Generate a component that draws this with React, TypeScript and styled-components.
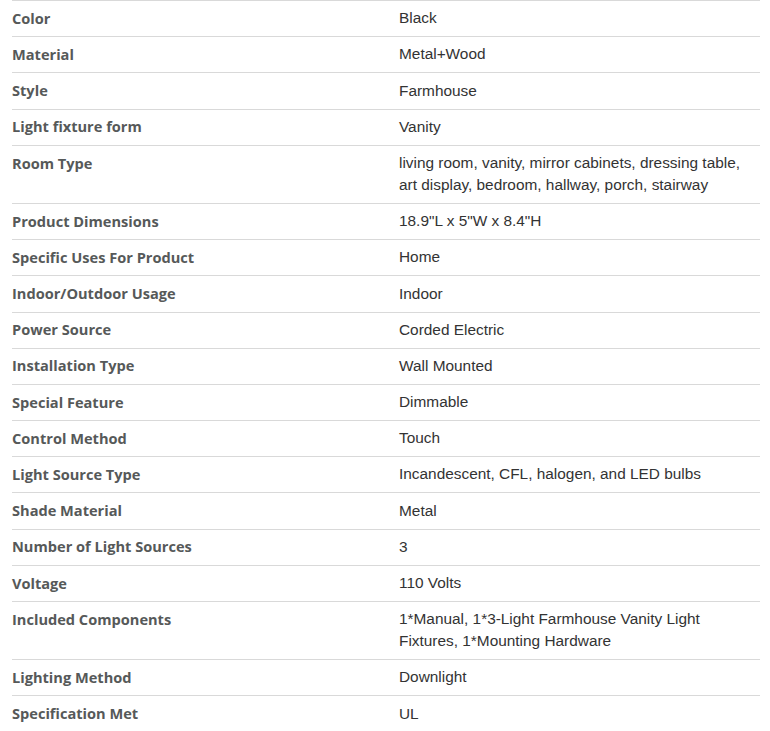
import React from "react";
import styled, { createGlobalStyle } from "styled-components";

const Global = createGlobalStyle`
  html, body { margin: 0; padding: 0; background: #fff; }
  body { width: 770px; overflow: hidden; }
`;

const Table = styled.div`
  margin: 0 10px 0 12px;
  border-top: 1px solid #d9d9d9;
  display: grid;
  grid-template-columns: 387px 1fr;
`;

const Row = styled.div`
  display: contents;
`;

const Cell = styled.div`
  border-bottom: 1px solid #d9d9d9;
  padding: 6.2px 0 7px;
  line-height: 22px;
`;

const Label = styled(Cell)`
  font-family: "Open Sans", "Liberation Sans", sans-serif;
  font-weight: 700;
  font-size: 14.6px;
  color: #565959;
  padding-top: 5.8px;
  padding-bottom: 7.4px;
`;

const Value = styled(Cell)`
  font-family: "Liberation Sans", Arial, sans-serif;
  font-size: 15.4px;
  color: #333;
  padding-right: 0;
`;

const rows: [string, string][] = [
  ["Color", "Black"],
  ["Material", "Metal+Wood"],
  ["Style", "Farmhouse"],
  ["Light fixture form", "Vanity"],
  ["Room Type", "living room, vanity, mirror cabinets, dressing table, art display, bedroom, hallway, porch, stairway"],
  ["Product Dimensions", "18.9\"L x 5\"W x 8.4\"H"],
  ["Specific Uses For Product", "Home"],
  ["Indoor/Outdoor Usage", "Indoor"],
  ["Power Source", "Corded Electric"],
  ["Installation Type", "Wall Mounted"],
  ["Special Feature", "Dimmable"],
  ["Control Method", "Touch"],
  ["Light Source Type", "Incandescent, CFL, halogen, and LED bulbs"],
  ["Shade Material", "Metal"],
  ["Number of Light Sources", "3"],
  ["Voltage", "110 Volts"],
  ["Included Components", "1*Manual, 1*3-Light Farmhouse Vanity Light Fixtures, 1*Mounting Hardware"],
  ["Lighting Method", "Downlight"],
  ["Specification Met", "UL"],
];

export default function App() {
  return (
    <>
      <Global />
      <Table>
        {rows.map(([k, v]) => (
          <Row key={k}>
            <Label>{k}</Label>
            <Value>{v}</Value>
          </Row>
        ))}
      </Table>
    </>
  );
}
